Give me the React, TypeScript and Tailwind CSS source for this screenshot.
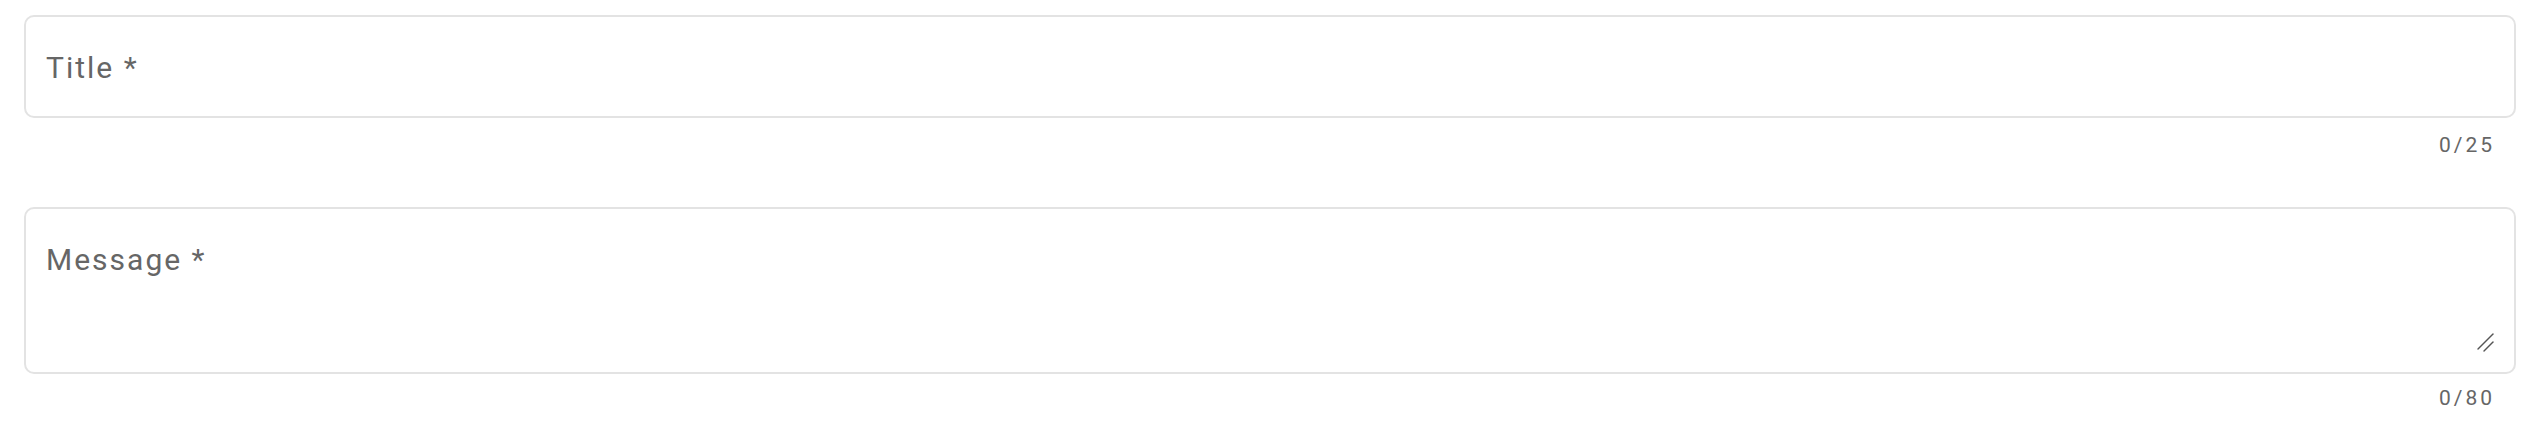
import React from "react";

export default function App() {
  return (
    <div
      className="w-[2532px] h-[422px] bg-white pl-6 pr-[16px] pt-[15px]"
      style={{ fontFamily: "Roboto, 'Noto Sans', sans-serif" }}
    >
      <div className="flex flex-col">
        <div className="h-[103px] rounded-[10px] border-2 border-[#e3e3e3] flex items-center px-[20px] pt-[2px]">
          <span className="text-[30px] leading-none tracking-[2px] text-[#666666]">Title *</span>
        </div>
        <div className="flex justify-end pr-[21px] pt-[17px] h-[89px]">
          <span className="text-[21px] leading-none tracking-[3px] text-[#666666]">0/25</span>
        </div>
        <div className="h-[167px] rounded-[10px] border-2 border-[#e3e3e3] flex flex-col pl-[20px] pr-[19px] pt-[36px] pb-[20px]">
          <span className="text-[30px] leading-none tracking-[2px] text-[#666666]">Message *</span>
          <div className="relative flex-1">
            <textarea
              aria-label="Message"
              className="w-full h-full resize-none bg-transparent outline-none border-0"
            />
            <svg
              className="absolute right-0 bottom-0"
              width="18"
              height="20"
              viewBox="0 0 18 20"
              fill="none"
            >
              <line x1="1" y1="17" x2="16" y2="2" stroke="#555555" strokeWidth="1.4" strokeLinecap="round" />
              <line x1="7" y1="19" x2="16" y2="10" stroke="#555555" strokeWidth="1.4" strokeLinecap="round" />
            </svg>
          </div>
        </div>
        <div className="flex justify-end pr-[21px] pt-[14px]">
          <span className="text-[21px] leading-none tracking-[3px] text-[#666666]">0/80</span>
        </div>
      </div>
    </div>
  );
}
